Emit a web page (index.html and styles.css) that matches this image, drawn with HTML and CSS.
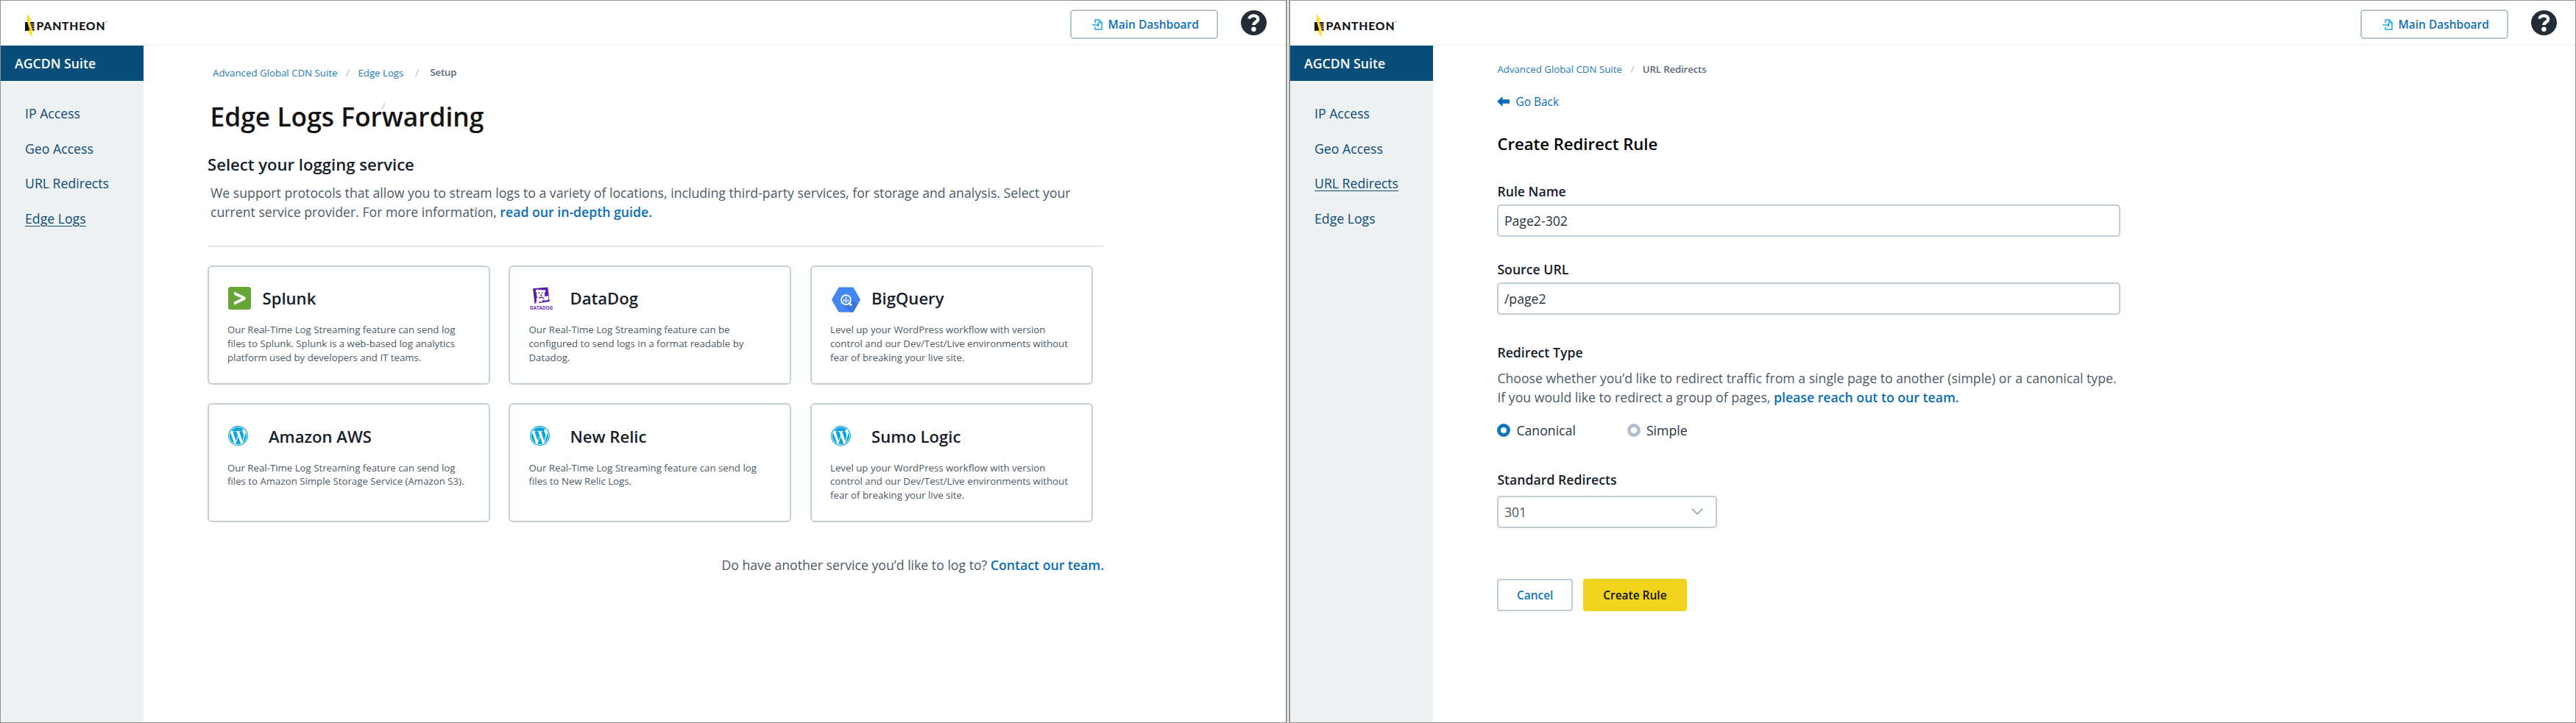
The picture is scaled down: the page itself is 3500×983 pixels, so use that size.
FILE: index.html
```html
<!DOCTYPE html>
<html lang="en">
<head>
<meta charset="utf-8">
<title>AGCDN Suite</title>
<link rel="stylesheet" href="styles.css">
</head>
<body>
<svg class="defs" aria-hidden="true">
  <symbol id="mark" viewBox="0 0 15 34">
    <path d="M1 12h12.500v12H1z" fill="#141414"/>
    <path d="M8 14.800h6M9 17.800h5M10 20.800h4" stroke="#fff" stroke-width=".8"/>
    <path d="M3.200.5 10 9.500H7l4.200 13.800h3L10 24l1.400 9.500L4 23.500h3.400L3.600 10H1.200L4 9.500z" fill="#ffdc28"/>
  </symbol>
  <symbol id="enter" viewBox="0 0 14 15">
    <g fill="none" stroke="#1fa9e1" stroke-width="1.500"><path d="M4 5.500V1h5.500L13 4.500V14H4v-3.500"/><path d="M9 1v4h4M0 8h9M7 5.800 9.200 8 7 10.200" stroke-width="1.300"/></g>
  </symbol>
  <symbol id="help" viewBox="0 0 35 34">
    <ellipse cx="17.500" cy="17" rx="17.500" ry="17" fill="#232d38"/>
    <path d="M11.300 11.500C12.300 5.800 23.300 6 23.200 12c0 4.400-5.800 3.800-5.800 8" fill="none" stroke="#fff" stroke-width="4.300"/>
    <circle cx="17.400" cy="25.700" r="3.200" fill="#fff"/>
  </symbol>
  <symbol id="wordpress" viewBox="8 8 496 496">
    <circle cx="256" cy="256" r="237" fill="none" stroke="#0aa5dc" stroke-width="20"/>
    <path fill="#0aa5dc" d="M61.700 169.400l101.500 278C92.200 413 43.300 340.200 43.300 256c0-30.900 6.600-60.100 18.400-86.600zm337.900 75.900c0-26.300-9.400-44.500-17.500-58.700-10.800-17.500-20.900-32.400-20.900-49.900 0-19.600 14.800-37.800 35.700-37.800.9 0 1.800.1 2.800.2-37.900-34.700-88.300-55.900-143.700-55.900-74.300 0-139.700 38.100-177.800 95.900 5 .2 9.700.3 13.700.3 22.200 0 56.700-2.700 56.700-2.700 11.500-.7 12.800 16.200 1.400 17.500 0 0-11.500 1.300-24.300 2l77.500 230.400L249.800 247l-33.100-90.800c-11.500-.7-22.300-2-22.300-2-11.500-.7-10.100-18.200 1.300-17.500 0 0 35.100 2.700 56 2.700 22.200 0 56.700-2.700 56.700-2.700 11.500-.7 12.800 16.200 1.400 17.500 0 0-11.500 1.300-24.300 2l76.900 228.700 21.200-70.900c9-29.400 16-50.500 16-68.700zm-139.900 29.300l-63.800 185.500c19.100 5.600 39.200 8.700 60.100 8.700 24.800 0 48.500-4.300 70.600-12.100-.6-.9-1.100-1.900-1.500-2.900l-65.400-179.200zm183-120.700c.9 6.800 1.400 14 1.400 21.900 0 21.600-4 45.800-16.200 76.200l-65 187.900C426.200 403 468.700 334.500 468.700 256c0-37-9.400-71.800-26-102.100z"/>
  </symbol>
</svg>

<div class="board">
  <section class="screen screen-logs">
    <header class="topbar">
      <div class="logo"><svg class="logo-mark"><use href="#mark"/></svg><span class="logo-name">PANTHEON</span><span class="logo-tm">™</span></div>
      <a class="dash"><svg class="dash-icon"><use href="#enter"/></svg><span>Main Dashboard</span></a>
      <svg class="help"><use href="#help"/></svg>
    </header>
    <div class="columns">
      <aside class="sidebar">
        <div class="suite">AGCDN Suite</div>
        <nav class="nav"><a>IP Access</a><a>Geo Access</a><a>URL Redirects</a><a class="current">Edge Logs</a></nav>
      </aside>
      <main class="main-logs">
        <div class="crumbs"><a class="c-root">Advanced Global CDN Suite</a><i class="slash">/</i><a class="c-logs">Edge Logs</a><i class="slash wide">/</i><span class="c-setup">Setup</span></div>
        <div class="title-row"><h1 class="title">Edge Logs Forwarding</h1><i class="stray">/</i></div>
        <h2 class="subtitle">Select your logging service</h2>
        <p class="lead">We support protocols that allow you to stream logs to a variety of locations, including third-party services, for storage and analysis. Select your<br>current service provider. For more information, <a class="strong-link">read our in-depth guide.</a></p>
        <hr class="rule">
        <div class="cards">
          <article class="card">
            <div class="card-head"><div class="slot narrow"><svg class="ic-splunk" viewBox="0 0 31 31"><rect width="31" height="31" rx="3.500" fill="#65a637"/><path d="M8 6.500 23.500 14v3.200L8 24.700v-4.300l10.300-4.800L8 10.800z" fill="#fff"/></svg></div><h3>Splunk</h3></div>
            <p>Our Real-Time Log Streaming feature can send log<br>files to Splunk. Splunk is a web-based log analytics<br>platform used by developers and IT teams.</p>
          </article>
          <article class="card">
            <div class="card-head"><div class="slot"><svg class="ic-dog" viewBox="0 0 31 31"><path d="M4 2.200 24.300.5l2.500 19.600L6.500 22.700z" fill="#5a1fa8"/><path d="M8 5c1.500-2 3.500-1.500 4.500-.6 2.200-.8 4-.6 5.500.3 1.500-.8 3-.4 3.300.8.2 1.200-.6 2-1.500 2.200.6 2 .8 3.800-.2 5.300l5.400-.7.700 5-5.200 1.500-2-1.300-2.500 3-3-.8-1.500 3-3.500.3C9.500 19 8.300 16.500 10 13.500 8.600 11.500 8.800 9.500 9.500 8 8 7.500 7.400 6.200 8 5z" fill="#fff"/><path d="M11.500 8.500h1.700M16 8h1.700M14 11.500l2.500-.3M12 15l4-1 3.500 2" stroke="#5a1fa8" stroke-width="1.400" fill="none"/><text x="0" y="30.500" textLength="31" lengthAdjust="spacingAndGlyphs" class="dog-word">DATADOG</text></svg></div><h3>DataDog</h3></div>
            <p>Our Real-Time Log Streaming feature can be<br>configured to send logs in a format readable by<br>Datadog.</p>
          </article>
          <article class="card">
            <div class="card-head"><div class="slot"><svg class="ic-bq" viewBox="0 0 39 35"><path d="M10.500.5h18a1.500 1.500 0 0 1 1.300.8l8.700 15.200a2 2 0 0 1 0 2l-8.700 15.200a1.500 1.500 0 0 1-1.300.8h-18a1.500 1.500 0 0 1-1.300-.8L.5 18.500a2 2 0 0 1 0-2L9.200 1.300a1.500 1.500 0 0 1 1.300-.8z" fill="#4285f4"/><path d="m24 13 11.300 11-5.500 9.700a1.500 1.500 0 0 1-1.300.8h-2.600L15 23.500z" fill="#3a72d0" opacity=".75"/><circle cx="19.500" cy="17.700" r="6.400" fill="#4285f4" stroke="#fff" stroke-width="1.900"/><path d="M24 22.300 27 25.300" stroke="#fff" stroke-width="2.400"/><path d="M16.700 17v3.300M19.500 14v7.500M22.300 17.500v2.800" stroke="#fff" stroke-width="1.600"/></svg></div><h3>BigQuery</h3></div>
            <p>Level up your WordPress workflow with version<br>control and our Dev/Test/Live environments without<br>fear of breaking your live site.</p>
          </article>
          <article class="card">
            <div class="card-head"><div class="slot"><svg class="ic-wp"><use href="#wordpress"/></svg></div><h3>Amazon AWS</h3></div>
            <p>Our Real-Time Log Streaming feature can send log<br>files to Amazon Simple Storage Service (Amazon S3).</p>
          </article>
          <article class="card">
            <div class="card-head"><div class="slot"><svg class="ic-wp"><use href="#wordpress"/></svg></div><h3>New Relic</h3></div>
            <p>Our Real-Time Log Streaming feature can send log<br>files to New Relic Logs.</p>
          </article>
          <article class="card">
            <div class="card-head"><div class="slot"><svg class="ic-wp"><use href="#wordpress"/></svg></div><h3>Sumo Logic</h3></div>
            <p>Level up your WordPress workflow with version<br>control and our Dev/Test/Live environments without<br>fear of breaking your live site.</p>
          </article>
        </div>
        <p class="contact">Do have another service you’d like to log to? <a class="strong-link">Contact our team.</a></p>
      </main>
    </div>
  </section>

  <section class="screen screen-rule">
    <header class="topbar">
      <div class="logo"><svg class="logo-mark"><use href="#mark"/></svg><span class="logo-name">PANTHEON</span><span class="logo-tm">™</span></div>
      <a class="dash"><svg class="dash-icon"><use href="#enter"/></svg><span>Main Dashboard</span></a>
      <svg class="help"><use href="#help"/></svg>
    </header>
    <div class="columns">
      <aside class="sidebar">
        <div class="suite">AGCDN Suite</div>
        <nav class="nav"><a>IP Access</a><a>Geo Access</a><a class="current">URL Redirects</a><a>Edge Logs</a></nav>
      </aside>
      <main class="main-rule">
        <div class="crumbs"><a class="c-root">Advanced Global CDN Suite</a><i class="slash">/</i><span class="c-here">URL Redirects</span></div>
        <a class="back"><svg class="back-icon" viewBox="0 0 17 14"><path d="M0 7 7.500 0v4.300H17v5.400H7.500V14z" fill="#0b6cb8"/></svg><span>Go Back</span></a>
        <h2 class="form-title">Create Redirect Rule</h2>
        <label class="label">Rule Name</label>
        <div class="field">Page2-302</div>
        <label class="label label-source">Source URL</label>
        <div class="field">/page2</div>
        <div class="label label-type">Redirect Type</div>
        <p class="lead hint">Choose whether you’d like to redirect traffic from a single page to another (simple) or a canonical type.<br>If you would like to redirect a group of pages, <a class="strong-link">please reach out to our team</a><b class="dot">.</b></p>
        <div class="radios"><span class="radio on">Canonical</span><span class="radio">Simple</span></div>
        <div class="label label-std">Standard Redirects</div>
        <div class="select"><span>301</span><svg class="chev" viewBox="0 0 16 9"><path d="M1 .8 8 7.700 15 .8" fill="none" stroke="#a3b5c1" stroke-width="2.200"/></svg></div>
        <div class="actions"><a class="btn cancel">Cancel</a><a class="btn create">Create Rule</a></div>
      </main>
    </div>
  </section>
</div>
</body>
</html>
```
FILE: styles.css
```css
*, *::before { box-sizing: border-box; margin: 0; padding: 0; }
body { background: #fff; font-family: "Open Sans", "Noto Sans", sans-serif; font-size: 17.680px; color: #16202b; overflow: hidden; }
svg { display: block; flex: none; }
.defs { display: none; }
i { font-style: normal; }
h1, h2, h3 { font-weight: 600; white-space: nowrap; }
p, a, span, label { white-space: nowrap; }

.board { display: flex; justify-content: space-between; width: 3500px; height: 983px; background: #f7f7f7; }
.screen { display: flex; flex-direction: column; width: 1749px; height: 983px; border: 1px solid #919191; background: #fff; }
.screen-logs { border-right-width: 2px; }
.screen-rule { border-left-width: 2px; }

/* Top bar */
.topbar { display: flex; align-items: flex-start; height: 61px; border-bottom: 1px solid #e9f0f1; padding: 12px 26px 0 32px; }
.screen-rule .topbar { padding-right: 25px; }
.logo { display: flex; margin-right: auto; padding-top: 5px; }
.logo-mark { width: 15px; height: 34px; }
.logo-name { margin: 6.600px 0 0 1.500px; font: 900 15.700px/20px Lato, sans-serif; letter-spacing: .8px; color: #141414; }
.logo-tm { margin: 9px 0 0 0; font-size: 4px; line-height: 8px; color: #555; }
.dash { display: flex; width: 201px; height: 40px; border: 2px solid #b5c4cf; border-radius: 5px; padding: 6px 0 0 28px; color: #0f70b7; font-size: 15.470px; font-weight: 600; line-height: 24px; }
.dash span { margin-left: 7.500px; }
.dash-icon { width: 14px; height: 15px; margin-top: 5px; }
.help { width: 35px; height: 34px; margin: 1px 0 0 31px; }

/* Sidebar */
.columns { display: flex; flex: 1; }
.sidebar { width: 194px; background: #edf1f2; color: #0c4a76; }
.suite { height: 48px; background: #094e7b; padding-left: 19px; color: #fff; font-weight: 600; line-height: 49px; }
.nav { display: flex; flex-direction: column; gap: 17.500px; padding: 29px 0 0 33px; line-height: 30px; }
.nav a { align-self: flex-start; }
.current { text-decoration: underline; text-underline-offset: 3px; text-decoration-thickness: 1px; }

/* Breadcrumbs */
.crumbs { display: flex; font-size: 13.260px; line-height: 20px; color: #1b7abb; }
.slash { width: 28px; text-align: center; color: #a9b8c3; }
.slash.wide { width: 36px; }
.c-setup, .c-here { color: #5a6875; font-weight: 600; letter-spacing: -.15px; }
.c-setup { margin-top: -1px; }

/* Logging services */
.main-logs { width: 1305px; padding: 27px 0 0 87px; }
.main-logs .crumbs { padding-left: 7px; }
.title-row { position: relative; margin: 24.200px 0 0 3.500px; }
.title { font-size: 35.360px; line-height: 50px; color: #141414; }
.stray { position: absolute; left: 233px; top: 2px; font-size: 13px; line-height: 18px; color: #a9b8c3; }
.subtitle { margin-top: 24.600px; font-size: 22.100px; line-height: 30px; }
.lead { margin: 11px 0 0 4px; line-height: 26.700px; color: #4c5a68; }
.strong-link { color: #0a6db7; font-weight: 600; }
.rule { height: 2px; margin-top: 31.600px; border: 0; background: #e3e9ec; }
.cards { display: grid; grid-template-columns: repeat(3, 384px); grid-template-rows: 162px 162px; gap: 25.300px 25.500px; margin: 25px 0 0 -.5px; }
.card { border: 2px solid #c3d0d8; border-radius: 6px; padding: 27.500px 0 0 25.500px; }
.card-head { display: flex; height: 35px; }
.slot { width: 56px; padding-left: 1px; }
.slot.narrow { width: 47.500px; }
.card h3 { font-size: 22.100px; line-height: 30px; }
.card p { margin-top: 14px; font-size: 13.260px; line-height: 18.700px; color: #4c5a68; }
.ic-splunk, .ic-dog { width: 31px; height: 31px; }
.ic-dog { overflow: visible; }
.ic-bq { width: 39px; height: 35px; margin-left: 1px; }
.ic-wp { width: 27px; height: 27px; margin-top: 1px; }
.dog-word { font: 700 7px "Open Sans", sans-serif; fill: #6a35b5; }
.contact { margin-top: 45px; line-height: 26px; color: #4c5a68; text-align: right; }

/* Redirect rule form */
.main-rule { width: 935px; padding: 21.500px 0 0 87.400px; }
.back { display: flex; align-items: center; gap: 8px; margin-top: 22px; font-size: 15.470px; line-height: 24px; color: #0b6cb8; }
.back-icon { width: 17px; height: 14px; }
.form-title { margin-top: 30.300px; font-size: 22.100px; line-height: 30px; color: #000; }
.label { display: block; margin-top: 37.400px; line-height: 26px; font-weight: 600; }
.field, .select { height: 44px; border: 2px solid #c0cdd6; border-radius: 5px; padding-left: 7.500px; line-height: 40px; color: #27323e; }
.label + .field { margin-top: 4.900px; width: 847px; }
.label-source { margin-top: 30.800px; }
.label-type { margin-top: 38.400px; }
.hint { margin: 8.400px 0 0; }
.dot { font-weight: 600; }
.radios { display: flex; margin-top: 17.600px; line-height: 26px; color: #27323e; }
.radio { display: flex; align-items: center; width: 176.500px; }
.radio::before { content: ""; width: 18px; height: 18px; margin-right: 8px; border: 5.500px solid #b0bfc9; border-radius: 50%; background: #fff; }
.radio.on::before { border-color: #0f75bd; }
.label-std { margin-top: 41.100px; }
.select { display: flex; justify-content: space-between; width: 299px; margin-top: 9.200px; padding-right: 17px; color: #4c5a68; }
.chev { width: 16px; height: 9px; margin-top: 15.500px; }
.actions { display: flex; gap: 14px; margin-top: 69.400px; }
.btn { height: 44px; border-radius: 4px; text-align: center; font-size: 15.470px; font-weight: 600; line-height: 44px; }
.cancel { width: 102.500px; border: 2px solid #c0cdd6; line-height: 40px; color: #0f75bd; }
.create { width: 141px; background: #efd31c; color: #111; }
```
